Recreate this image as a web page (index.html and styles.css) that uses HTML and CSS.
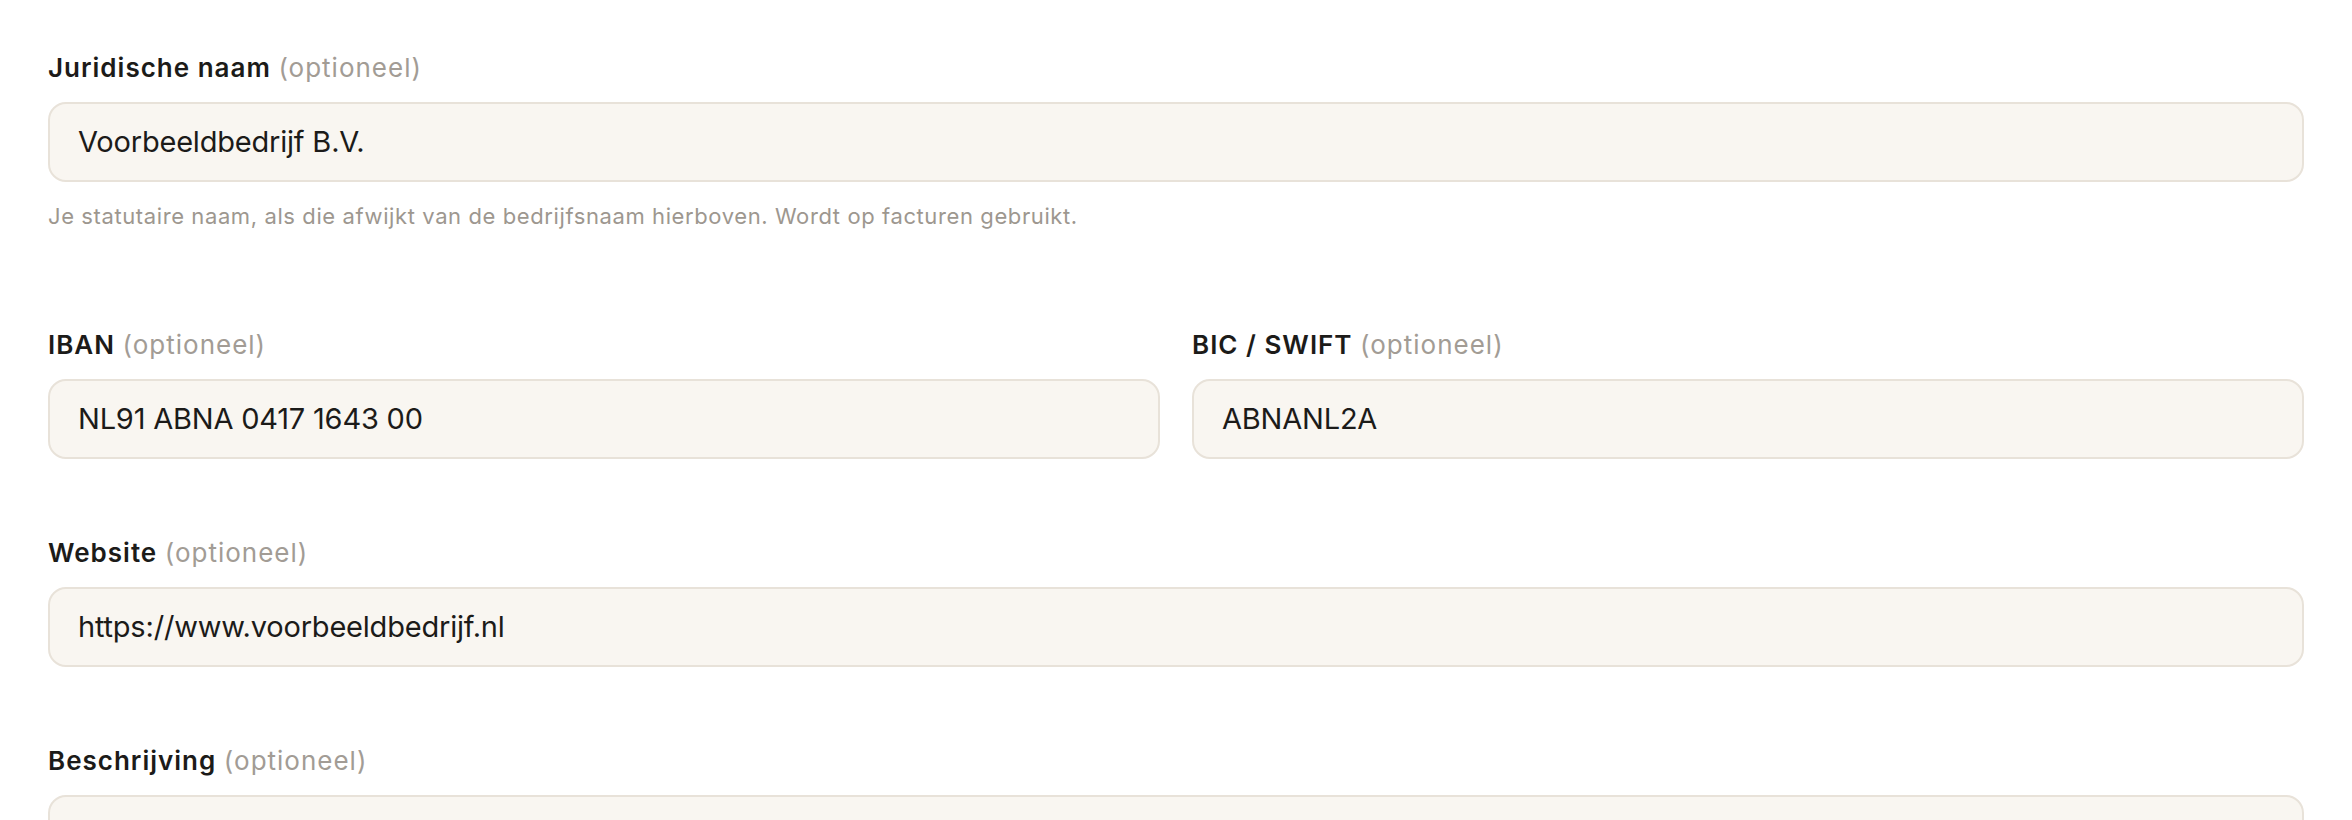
FILE: index.html
```html
<!DOCTYPE html>
<html lang="nl">
<head>
<meta charset="utf-8">
<title>Bedrijfsgegevens</title>
<link rel="stylesheet" href="styles.css">
</head>
<body>
<form class="form">
  <div class="field field-legal">
    <label class="label">Juridische naam <span class="opt">(optioneel)</span></label>
    <div class="input">Voorbeeldbedrijf B.V.</div>
    <p class="help">Je statutaire naam, als die afwijkt van de bedrijfsnaam hierboven. Wordt op facturen gebruikt.</p>
  </div>
  <div class="row">
    <div class="field">
      <label class="label">IBAN <span class="opt">(optioneel)</span></label>
      <div class="input">NL91 ABNA 0417 1643 00</div>
    </div>
    <div class="field">
      <label class="label">BIC / SWIFT <span class="opt">(optioneel)</span></label>
      <div class="input">ABNANL2A</div>
    </div>
  </div>
  <div class="field">
    <label class="label">Website <span class="opt">(optioneel)</span></label>
    <div class="input">https://www.voorbeeldbedrijf.nl</div>
  </div>
  <div class="field">
    <label class="label">Beschrijving <span class="opt">(optioneel)</span></label>
    <div class="input textarea"></div>
  </div>
</form>
</body>
</html>
```

FILE: styles.css
```css
html, body {
  margin: 0;
  padding: 0;
  background: #ffffff;
}
body {
  font-family: Inter, "DejaVu Sans", sans-serif;
  color: #1c1b19;
}
.form {
  display: flex;
  flex-direction: column;
  gap: 76px;
  padding: 50px 48px 0 48px;
}
.field {
  display: flex;
  flex-direction: column;
  min-width: 0;
}
.field-legal {
  margin-bottom: 20px;
}
.row {
  display: grid;
  grid-template-columns: 1fr 1fr;
  gap: 32px;
}
.label {
  font-size: 26px;
  line-height: 36px;
  font-weight: 600;
  letter-spacing: 1px;
  color: #1c1b19;
  margin-bottom: 16px;
}
.opt {
  font-weight: 400;
  color: #a29c95;
}
.input {
  box-sizing: border-box;
  height: 80px;
  display: flex;
  align-items: center;
  padding: 0 28px 2px 28px;
  background: #f9f6f1;
  border: 2px solid #e8e2d9;
  border-radius: 18px;
  font-size: 29px;
  letter-spacing: -0.2px;
  color: #1c1b19;
  white-space: nowrap;
}
.textarea {
  height: 160px;
}
.help {
  margin: 19px 0 0 0;
  font-size: 22px;
  line-height: 30px;
  letter-spacing: 0.6px;
  color: #9d978f;
}
```
